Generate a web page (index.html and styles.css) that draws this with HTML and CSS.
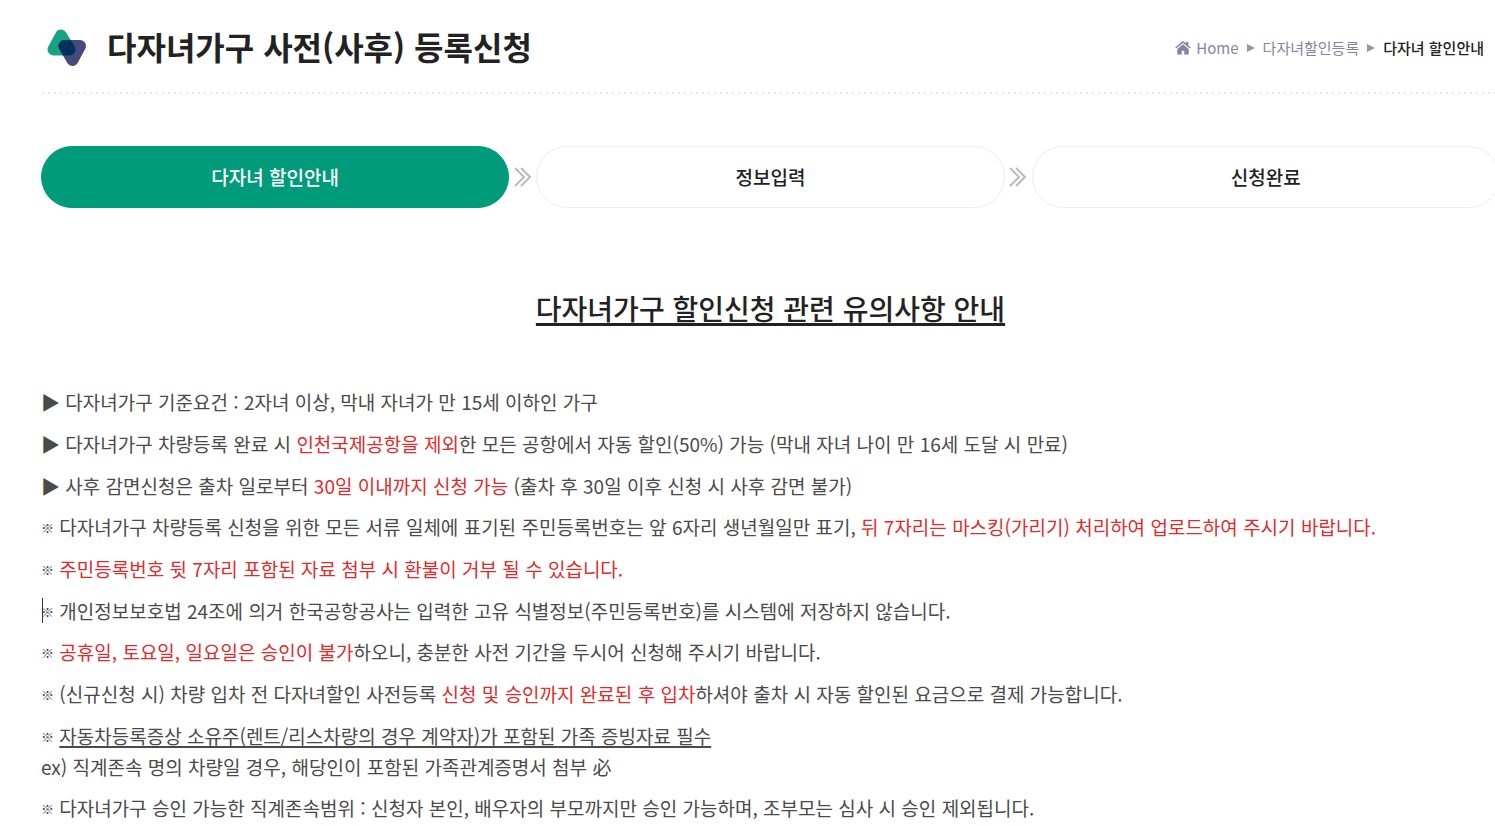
FILE: index.html
```html
<!DOCTYPE html>
<html lang="ko">
<head>
<meta charset="utf-8">
<meta name="viewport" content="width=device-width, initial-scale=1">
<title>다자녀가구 사전(사후) 등록신청</title>
<link rel="stylesheet" href="styles.css">
</head>
<body>
<div class="page">
  <header class="page-header">
    <svg class="logo" viewBox="0 0 40 38" aria-hidden="true">
      <defs>
        <path id="tri-up" d="M14 6.500 6.500 20.500H22.500Z" stroke-width="12" stroke-linejoin="round"/>
        <path id="tri-down" d="M17.500 17H33L25.500 31Z" stroke-width="12" stroke-linejoin="round"/>
        <mask id="overlap" maskUnits="userSpaceOnUse" x="0" y="0" width="40" height="38"><use href="#tri-up" fill="#fff" stroke="#fff"/></mask>
      </defs>
      <use href="#tri-up" fill="#17a383" stroke="#17a383"/>
      <use href="#tri-down" fill="#454b7c" stroke="#454b7c"/>
      <g mask="url(#overlap)"><use href="#tri-down" fill="#04305c" stroke="#04305c"/></g>
    </svg>
    <h1 class="page-title">다자녀가구 사전(사후) 등록신청</h1>
    <nav class="breadcrumb" aria-label="현재 위치">
      <a class="crumb" href="#home"><svg class="home-icon" viewBox="0 0 16 14" aria-hidden="true"><path d="M8 3.300 2.300 8V13q0 .6.600.6H6.700V9.800H9.300V13.600H13.100q.6 0 .6-.6V8Z"/><path d="M8.800.6 11 2.400V.9H13.400V4.400L15.800 6.500 14.900 7.600 8 1.900 1.100 7.600.200 6.500 7.200.6Q8 0 8.800.6Z"/></svg>Home</a>
      <svg class="crumb-arrow" viewBox="0 0 8 10" aria-hidden="true"><path d="M0 1 8 5 0 9Z"/></svg>
      <a class="crumb" href="#discount">다자녀할인등록</a>
      <svg class="crumb-arrow" viewBox="0 0 8 10" aria-hidden="true"><path d="M0 1 8 5 0 9Z"/></svg>
      <a class="crumb crumb-current" href="#guide" aria-current="page">다자녀 할인안내</a>
    </nav>
  </header>
  <svg class="divider" width="100%" height="2" aria-hidden="true"><line x1="1" y1="1" x2="100%" y2="1"/></svg>

  <main>
    <ol class="steps">
      <li class="step step-active" aria-current="step">다자녀 할인안내</li>
      <li class="step-arrow" aria-hidden="true"><svg viewBox="0 0 18 20"><path d="M1 1 10 10 1 19M7 1 16 10 7 19"/></svg></li>
      <li class="step">정보입력</li>
      <li class="step-arrow" aria-hidden="true"><svg viewBox="0 0 18 20"><path d="M1 1 10 10 1 19M7 1 16 10 7 19"/></svg></li>
      <li class="step">신청완료</li>
    </ol>

    <h2 class="notice-title">다자녀가구 할인신청 관련 유의사항 안내</h2>

    <div class="notice">
      <div class="notice-group">
        <p>▶ 다자녀가구 기준요건 : 2자녀 이상, 막내 자녀가 만 15세 이하인 가구</p>
        <p>▶ 다자녀가구 차량등록 완료 시 <span class="alert">인천국제공항을 제외</span>한 모든 공항에서 자동 할인(50%) 가능 (막내 자녀 나이 만 16세 도달 시 만료)</p>
        <p>▶ 사후 감면신청은 출차 일로부터 <span class="alert">30일 이내까지 신청 가능</span> (출차 후 30일 이후 신청 시 사후 감면 불가)</p>
      </div>
      <div class="notice-group">
        <p><span class="mark">※</span> 다자녀가구 차량등록 신청을 위한 모든 서류 일체에 표기된 주민등록번호는 앞 6자리 생년월일만 표기, <span class="alert">뒤 7자리는 마스킹(가리기) 처리하여 업로드하여 주시기 바랍니다.</span></p>
        <p><span class="mark">※</span> <span class="alert">주민등록번호 뒷 7자리 포함된 자료 첨부 시 환불이 거부 될 수 있습니다.</span></p>
        <p class="caret"><span class="mark">※</span> 개인정보보호법 24조에 의거 한국공항공사는 입력한 고유 식별정보(주민등록번호)를 시스템에 저장하지 않습니다.</p>
      </div>
      <div class="notice-group">
        <p><span class="mark">※</span> <span class="alert">공휴일, 토요일, 일요일은 승인이 불가</span>하오니, 충분한 사전 기간을 두시어 신청해 주시기 바랍니다.</p>
        <p><span class="mark">※</span> (신규신청 시) 차량 입차 전 다자녀할인 사전등록 <span class="alert">신청 및 승인까지 완료된 후 입차</span>하셔야 출차 시 자동 할인된 요금으로 결제 가능합니다.</p>
        <p><span class="mark">※</span> <u>자동차등록증상 소유주(렌트/리스차량의 경우 계약자)가 포함된 가족 증빙자료 필수</u><br>ex) 직계존속 명의 차량일 경우, 해당인이 포함된 가족관계증명서 첨부 必</p>
      </div>
      <div class="notice-group">
        <p><span class="mark">※</span> 다자녀가구 승인 가능한 직계존속범위 : 신청자 본인, 배우자의 부모까지만 승인 가능하며, 조부모는 심사 시 승인 제외됩니다.</p>
      </div>
    </div>
  </main>
</div>
</body>
</html>
```
FILE: styles.css
```css
* { box-sizing: border-box; }

body {
  margin: 0;
  background: #fff;
  color: #4a4a4a;
  font-family: "Noto Sans CJK KR", sans-serif;
  font-size: 19px;
  line-height: 31px;
  overflow-x: hidden;
}

.page { padding-left: 41px; margin-right: -5px; }

.page-header {
  display: flex;
  align-items: center;
  height: 92px;
  padding: 4px 16px 0 6px;
}

.logo { width: 40px; height: 38px; flex: none; }

.page-title {
  margin: 0 auto 0 20px;
  padding-bottom: 4px;
  color: #222;
  font-size: 32px;
  font-weight: 700;
  line-height: 48px;
  white-space: nowrap;
}

.breadcrumb {
  display: flex;
  align-items: center;
  gap: 8px;
  font-size: 15px;
  line-height: 24px;
  white-space: nowrap;
}

.crumb {
  display: flex;
  align-items: center;
  gap: 5px;
  color: #7d87a0;
  text-decoration: none;
}

.crumb-current { color: #222; font-weight: 500; }
.home-icon { width: 16px; height: 14px; fill: #7d87a0; }
.crumb-arrow { width: 8px; height: 10px; fill: #999; }

.divider { display: block; }
.divider line { stroke: #e6e6e6; stroke-width: 2; stroke-dasharray: 2 4; }

.steps {
  display: flex;
  margin: 52px 0 0;
  padding: 0;
  list-style: none;
}

.step {
  flex: 1;
  height: 62px;
  border: 1px solid #eee;
  border-radius: 31px;
  color: #222;
  font-weight: 500;
  line-height: 60px;
  text-align: center;
}

.step-active { background: #009b7a; border-color: #009b7a; color: #fff; }

.step-arrow {
  display: flex;
  align-items: center;
  justify-content: center;
  width: 27px;
}

.step-arrow svg {
  width: 18px;
  height: 20px;
  fill: none;
  stroke: #bbb;
  stroke-width: 2;
}

.notice-title {
  margin: 78px 0 0;
  color: #222;
  font-size: 28px;
  font-weight: 500;
  line-height: 44px;
  text-align: center;
  text-decoration: underline;
  text-decoration-thickness: 3px;
  text-decoration-skip-ink: none;
  text-underline-offset: 3px;
}

.notice { display: grid; gap: 10px; margin-top: 56px; }
.notice-group { display: grid; gap: 11px; }
.notice p { margin: 0; white-space: nowrap; }
.notice u { text-underline-offset: 2px; text-decoration-thickness: 2px; }
.alert { color: #e02b2b; }
.mark { font-size: 13px; font-weight: 900; line-height: 1; vertical-align: 2px; }

.caret { position: relative; }
.caret::before {
  content: "";
  position: absolute;
  left: 1px;
  top: 3px;
  width: 1px;
  height: 25px;
  background: #333;
}
```
